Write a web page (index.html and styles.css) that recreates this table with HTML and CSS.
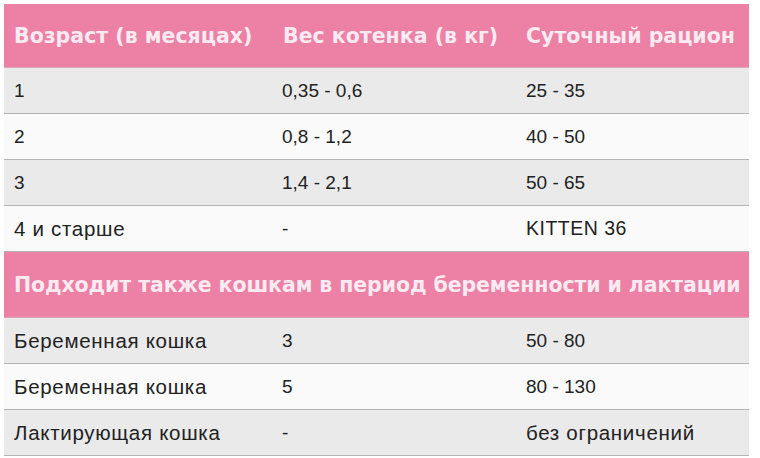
FILE: index.html
```html
<!DOCTYPE html>
<html lang="ru">
<head>
<meta charset="utf-8">
<link rel="stylesheet" href="styles.css">
</head>
<body>
<table class="feed">
  <colgroup>
    <col class="c1"><col class="c2"><col class="c3">
  </colgroup>
  <tr class="head">
    <th>Возраст (в месяцах)</th>
    <th>Вес котенка (в кг)</th>
    <th>Суточный рацион</th>
  </tr>
  <tr class="grey"><td>1</td><td>0,35 - 0,6</td><td>25 - 35</td></tr>
  <tr class="white"><td>2</td><td>0,8 - 1,2</td><td>40 - 50</td></tr>
  <tr class="grey"><td>3</td><td>1,4 - 2,1</td><td>50 - 65</td></tr>
  <tr class="white"><td class="word">4 и старше</td><td>-</td><td class="word kit">KITTEN 36</td></tr>
  <tr class="head band">
    <th colspan="3">Подходит также кошкам в период беременности и лактации</th>
  </tr>
  <tr class="grey"><td class="word">Беременная кошка</td><td>3</td><td>50 - 80</td></tr>
  <tr class="white"><td class="word">Беременная кошка</td><td>5</td><td>80 - 130</td></tr>
  <tr class="grey"><td class="word">Лактирующая кошка</td><td>-</td><td class="word">без ограничений</td></tr>
</table>
</body>
</html>
```
FILE: styles.css
```css
html, body {
  margin: 0;
  padding: 0;
  background: #ffffff;
}
body {
  padding: 4px 0 0 4px;
}
.feed {
  border-collapse: collapse;
  width: 745px;
  table-layout: fixed;
  font-family: "Liberation Sans", Arial, sans-serif;
}
.c1 { width: 269px; }
.c2 { width: 243px; }
.c3 { width: 233px; }
.feed th, .feed td {
  text-align: left;
  padding: 0 0 0 10px;
  white-space: nowrap;
}
.head th {
  background: #ec80a5;
  color: #fbeaf1;
  font-family: "DejaVu Sans", Verdana, sans-serif;
  font-weight: bold;
  font-size: 20.5px;
  height: 63px;
  border-bottom: 1px solid #d8a9bb;
}
.band th {
  height: 65px;
  letter-spacing: -0.1px;
}
.feed td {
  font-size: 19px;
  color: #222222;
  height: 45px;
  border-bottom: 1px solid #b4b4b4;
}
.feed td.word {
  font-size: 20.5px;
  letter-spacing: 0.7px;
}
.feed td.kit {
  font-size: 19.5px;
  letter-spacing: 0.5px;
}
.grey td { background: #eaeaea; }
.white td { background: #fafafa; }
.feed td:nth-child(2) { padding-left: 9px; }
.feed td:nth-child(3) { padding-left: 10px; }
```
